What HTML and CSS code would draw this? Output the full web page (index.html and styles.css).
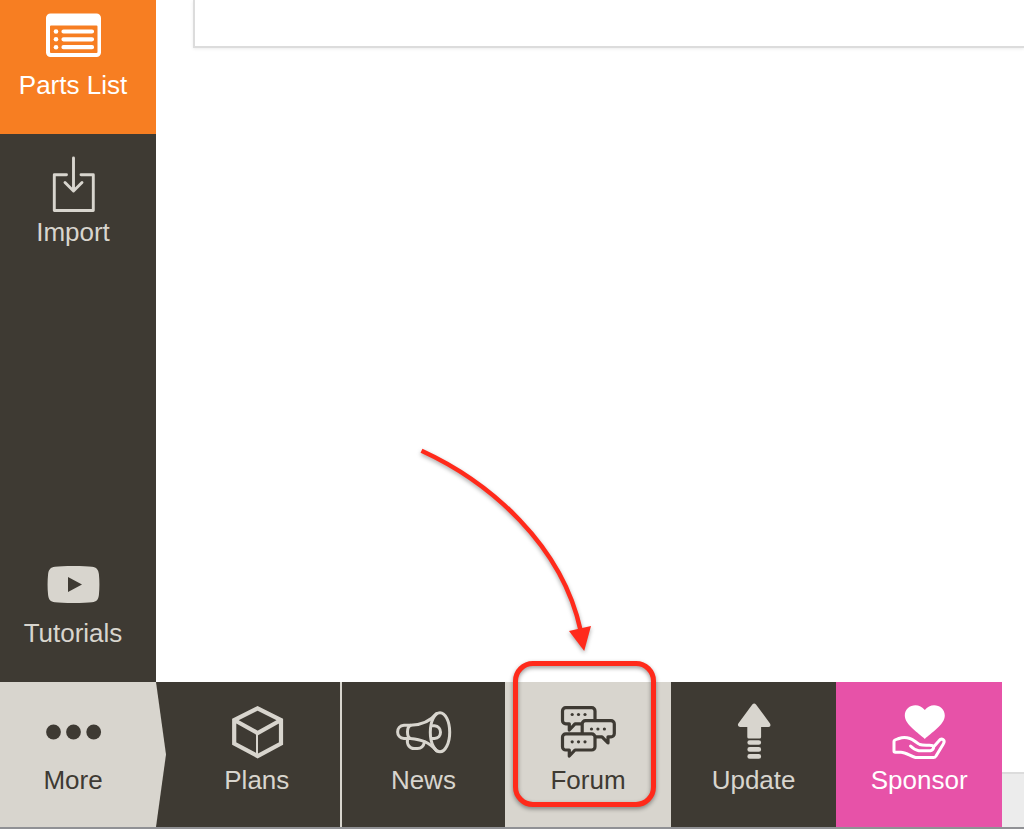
FILE: index.html
```html
<!DOCTYPE html>
<html lang="en">
<head>
<meta charset="utf-8">
<title>Parts List</title>
<link rel="stylesheet" href="styles.css">
</head>
<body>
<div class="app">
  <div class="workspace">
    <nav class="sidebar" aria-label="Main">
      <button class="tile tile-parts" type="button">
        <svg class="icon" viewBox="0 0 64 64" aria-hidden="true">
          <path fill="currentColor" fill-rule="evenodd" d="M9.500 7.500H55.500a4.500 4.500 0 0 1 4.500 4.500V46.500a4.500 4.500 0 0 1-4.500 4.500H9.500a4.500 4.500 0 0 1-4.500-4.500V12a4.500 4.500 0 0 1 4.500-4.500ZM10 19.500a1 1 0 0 0-1 1V46a1 1 0 0 0 1 1H55.500a1 1 0 0 0 1-1V20.500a1 1 0 0 0-1-1Z"/>
          <g fill="currentColor"><circle cx="15" cy="25.500" r="2.300"/><circle cx="15" cy="33.300" r="2.300"/><circle cx="15" cy="41.200" r="2.300"/></g>
          <path d="M22.500 25.500H51M22.500 33.300H51M22.500 41.200H51" stroke="currentColor" stroke-width="4.200" stroke-linecap="round"/>
        </svg>
        <span class="label">Parts List</span>
      </button>
      <button class="tile" type="button">
        <svg class="icon" viewBox="0 0 64 64" aria-hidden="true">
          <path d="M25.500 21.700H13.300V57.500H52.300V21.700H40M32.500 5V37.500M24 29.500L32.500 38L41 29.500" fill="none" stroke="currentColor" stroke-width="2.900" stroke-linecap="round" stroke-linejoin="round"/>
        </svg>
        <span class="label">Import</span>
      </button>
      <button class="tile tile-tutorials" type="button">
        <svg class="icon" viewBox="0 0 64 64" aria-hidden="true">
          <path fill="currentColor" fill-rule="evenodd" d="M32.500 12C41 12 47 12.200 51 12.700C55.500 13.200 57.400 15.500 57.900 20C58.600 27 58.600 34 57.900 41C57.400 45.500 55.500 47.800 51 48.300C47 48.800 41 49 32.500 49C24 49 18 48.800 14 48.300C9.500 47.800 7.600 45.500 7.100 41C6.400 34 6.400 27 7.100 20C7.600 15.500 9.500 13.200 14 12.700C18 12.200 24 12 32.500 12ZM27 23V38L41 30.500Z"/>
        </svg>
        <span class="label">Tutorials</span>
      </button>
    </nav>
    <main class="content"><div class="panel"></div></main>
  </div>
  <nav class="bar" aria-label="More">
    <div class="more-cell">
      <button class="tile tile-more" type="button">
        <svg class="icon" viewBox="0 0 64 64" aria-hidden="true">
          <g fill="currentColor"><circle cx="12.500" cy="31" r="7.400"/><circle cx="32.500" cy="31" r="7.400"/><circle cx="52.700" cy="31" r="7.400"/></g>
        </svg>
        <span class="label">More</span>
      </button>
    </div>
    <button class="tile" type="button">
      <svg class="icon" viewBox="0 0 64 64" aria-hidden="true">
        <path d="M32.600 7.300L56 19V42.500L32.600 55L9.200 42.500V19ZM9.200 19L32.600 32L56 19" fill="none" stroke="currentColor" stroke-width="4.200"/>
        <path d="M32 32V55" stroke="currentColor" stroke-width="2"/>
      </svg>
      <span class="label">Plans</span>
    </button>
    <button class="tile tile-news" type="button">
      <svg class="icon" viewBox="0 0 64 64" aria-hidden="true">
        <g fill="none" stroke="currentColor" stroke-width="3" stroke-linecap="round" stroke-linejoin="round">
          <ellipse cx="49" cy="31.200" rx="9.700" ry="19.500"/>
          <path d="M45.500 12.500C38 22 28 24 19.500 24.300C15.500 26 15.500 36 19.500 37.500C30 38.500 38 41 45.500 49.800"/>
          <path d="M19.500 24.300H13C4.500 25 4.500 37 13 37.500H19.500"/>
          <path d="M16.500 38C15.500 44 19 47.500 23 47.500H26.500C30 47.500 32.500 45.500 33.500 41"/>
          <path d="M41 24.800H43.500C51.500 25.500 51.500 37 43.500 37.500H41"/>
        </g>
      </svg>
      <span class="label">News</span>
    </button>
    <button class="tile tile-forum" type="button">
      <svg class="icon" viewBox="0 0 64 64" aria-hidden="true">
        <g class="bubbles" stroke="currentColor" stroke-width="3.200" stroke-linejoin="round">
          <path d="M9.800 6.600H35.700a3.300 3.300 0 0 1 3.300 3.300V19.500a3.300 3.300 0 0 1-3.300 3.300H19L13.300 29V22.800H9.800a3.300 3.300 0 0 1-3.300-3.300V9.900a3.300 3.300 0 0 1 3.300-3.300Z"/>
          <path d="M29.500 19.600H55a3.300 3.300 0 0 1 3.300 3.300V32.500a3.300 3.300 0 0 1-3.300 3.300H52V42L46 35.800H29.500a3.300 3.300 0 0 1-3.300-3.300V22.900a3.300 3.300 0 0 1 3.300-3.300Z"/>
          <path d="M9.800 32.800H35.700a3.300 3.300 0 0 1 3.300 3.300V45.700a3.300 3.300 0 0 1-3.300 3.300H19L13.300 55V49H9.800a3.300 3.300 0 0 1-3.300-3.300V36.100a3.300 3.300 0 0 1 3.300-3.300Z"/>
        </g>
        <g fill="currentColor">
          <circle cx="16.200" cy="13.500" r="1.600"/><circle cx="22.500" cy="13.500" r="1.600"/><circle cx="29" cy="13.500" r="1.600"/>
          <circle cx="35.500" cy="28" r="1.600"/><circle cx="41.900" cy="28" r="1.600"/><circle cx="48.400" cy="28" r="1.600"/>
          <circle cx="16.200" cy="40.800" r="1.600"/><circle cx="22.500" cy="40.800" r="1.600"/><circle cx="29" cy="40.800" r="1.600"/>
        </g>
      </svg>
      <span class="label">Forum</span>
      <span class="ring"></span>
      <svg class="pointer" viewBox="0 0 185 210" aria-hidden="true">
        <path d="M6.500 5.700C75 37 147 100 165.500 185" fill="none" stroke="#ff2a1b" stroke-width="4.500"/>
        <path d="M154 186L176 181L169.200 206Z" fill="#ff2a1b"/>
      </svg>
    </button>
    <button class="tile" type="button">
      <svg class="icon" viewBox="0 0 64 64" aria-hidden="true">
        <path d="M30.300 3.400Q32.200 1.600 34 3.400L48 22.500Q49.500 25.600 46.500 25.900H39.100V36Q39.100 37.500 37.600 37.500H26.800Q25.300 37.500 25.300 36V25.900H18Q15 25.600 16.300 22.500Z" fill="currentColor"/>
        <path d="M27.700 41.500H36.800M27.700 48.400H36.800M27.700 55.400H36.800" stroke="currentColor" stroke-width="4.700" stroke-linecap="round"/>
      </svg>
      <span class="label">Update</span>
    </button>
    <button class="tile tile-sponsor" type="button">
      <svg class="icon" viewBox="0 0 64 64" aria-hidden="true">
        <path d="M37.800 38C32 32 17.800 24 17.800 14.500C17.800 4 31.500 .5 37.800 9C44 .5 57.800 4 57.800 14.500C57.800 24 43.500 32 37.800 38Z" fill="currentColor"/>
        <path d="M23.500 45C26 47.500 28.500 49.300 31.800 49.700H43.500C45.500 49.300 47 47.500 46.500 45.700C46 44.300 44.500 44.200 42.500 44.200C38 44.200 35.500 44.500 32.800 43.500C29.500 42 26.500 38.500 23 37.500C19 36 15.500 36 12 37.500C10 38.400 7 38.500 7 40.500V50Q7 51.200 8.200 51.200H14C19 51.200 23 55 28.500 56.500H46.500Q48 56.500 49 55L56.300 43C57.500 41 57.500 39.500 56 38.500C54.500 37.600 53 38.500 51.800 40L47 45.500" fill="none" stroke="currentColor" stroke-width="3" stroke-linecap="round" stroke-linejoin="round"/>
      </svg>
      <span class="label">Sponsor</span>
    </button>
    <div class="status"></div>
  </nav>
</div>
</body>
</html>
```
FILE: styles.css
```css
:root {
  --dark: #3e3a33;
  --light: #d8d5ce;
  --orange: #f77e22;
  --pink: #e752a8;
  --red: #ff2a1b;
}

* {
  box-sizing: border-box;
}

body {
  margin: 0;
  background: #fff;
  font-family: "Liberation Sans", Arial, sans-serif;
}

.app {
  display: flex;
  flex-direction: column;
  min-height: 100vh;
  border-bottom: 2px solid #909195;
}

.workspace {
  display: flex;
  flex: 1;
}

.sidebar {
  display: flex;
  flex-direction: column;
  width: 156px;
  background: var(--dark);
}

.tile {
  display: flex;
  flex-direction: column;
  align-items: center;
  margin: 0;
  padding: 19px 0 32px;
  border: 0;
  background: var(--dark);
  color: var(--light);
  font: inherit;
  cursor: pointer;
}

.sidebar .tile {
  padding-right: 10px;
}

.sidebar .tile-parts {
  padding-top: 6px;
  padding-bottom: 34px;
  background: var(--orange);
  color: #fff;
}

.sidebar .tile-tutorials {
  margin-top: auto;
  padding-bottom: 34px;
}

.icon {
  display: block;
  width: 64px;
  height: 64px;
}

.label {
  font-size: 26px;
  line-height: 30px;
}

.content {
  flex: 1;
  padding-left: 37px;
}

.panel {
  height: 48px;
  border: solid #dcdcdc;
  border-width: 0 0 2px 2px;
  box-shadow: 0 1px 3px rgba(0, 0, 0, 0.08);
}

.bar {
  display: grid;
  grid-template-columns: 174px repeat(5, 1fr) 22px;
}

.more-cell {
  display: grid;
  padding-right: 8px;
  background: var(--dark);
}

.tile-more {
  padding-right: 20px;
  background: var(--light);
  color: var(--dark);
  clip-path: polygon(0 0, 156px 0, 100% 50%, 156px 100%, 0 100%);
}

.tile-news {
  border-left: 2px solid var(--light);
}

.tile-forum {
  position: relative;
  background: var(--light);
  color: var(--dark);
}

.bubbles {
  fill: var(--light);
}

.ring {
  position: absolute;
  top: -21px;
  right: 15px;
  bottom: 20px;
  left: 8px;
  border: 5px solid var(--red);
  border-radius: 20px;
  filter: drop-shadow(0 2px 2px rgba(0, 0, 0, 0.4));
}

.pointer {
  position: absolute;
  top: -237px;
  left: -90px;
  width: 185px;
  height: 210px;
  filter: drop-shadow(0 2px 2px rgba(0, 0, 0, 0.35));
  pointer-events: none;
}

.tile-sponsor {
  background: var(--pink);
  color: #fff;
}

.status {
  align-self: end;
  height: 55px;
  border-top: 2px solid #dcdcdc;
  background: #ececec;
}
```
